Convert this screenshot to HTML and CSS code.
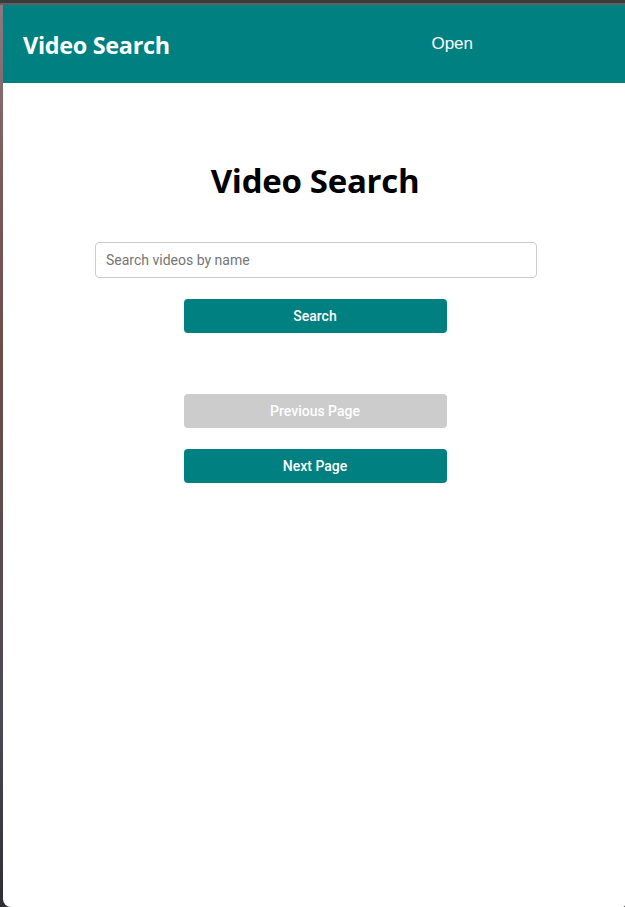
FILE: index.html
```html
<!DOCTYPE html>
<html lang="en">
<head>
<meta charset="utf-8">
<title>Video Search</title>
<link rel="stylesheet" href="styles.css">
</head>
<body>
<div class="desk">
  <div class="app">
    <header class="topbar">
      <div class="brand">Video Search</div>
      <nav class="nav"><span class="nav-link">Open</span></nav>
    </header>
    <main class="content">
      <h1 class="title">Video Search</h1>
      <input class="search-input" type="text" placeholder="Search videos by name">
      <button class="btn">Search</button>
      <div class="pager">
        <button class="btn btn-disabled" disabled>Previous Page</button>
        <button class="btn">Next Page</button>
      </div>
    </main>
  </div>
</div>
</body>
</html>
```
FILE: styles.css
```css
html, body {
  margin: 0;
  padding: 0;
  height: 907px;
  overflow: hidden;
}
body {
  background: #3b3b3d;
}
.desk {
  height: 907px;
  box-sizing: border-box;
  padding-top: 5px;
  padding-left: 3px;
  background:
    linear-gradient(#3b3b3d, #3b3b3d) top left / 100% 3px no-repeat,
    linear-gradient(#606062, #606062) 0 3px / 100% 2px no-repeat,
    linear-gradient(180deg, #8c7a86 0%, #7a5a58 20%, #6e4c48 40%, #5a4c50 60%, #4a4a52 80%, #2e2e32 100%);
}
.app {
  height: 902px;
  background: #ffffff;
  border-bottom-left-radius: 8px;
  border-bottom-right-radius: 2px;
  overflow: hidden;
}
.topbar {
  height: 78px;
  background: #008080;
  display: flex;
  align-items: center;
  padding-left: 20px;
  color: #ffffff;
}
.brand {
  font-family: "Open Sans", "Noto Sans", sans-serif;
  font-weight: 700;
  font-size: 23.4px;
  letter-spacing: -0.3px;
  padding-top: 2px;
}
.nav {
  margin-left: auto;
  padding-right: 152px;
  padding-bottom: 0;
}
.nav-link {
  font-family: "Liberation Sans", Arial, sans-serif;
  font-size: 17px;
  color: #ffffff;
}
.content {
  display: flex;
  flex-direction: column;
  align-items: center;
  padding-top: 70px;
  padding-left: 2px;
}
.title {
  margin: 0;
  font-family: "Open Sans", "Noto Sans", sans-serif;
  font-weight: 700;
  font-size: 33px;
  letter-spacing: -0.3px;
  line-height: 56px;
  color: #000000;
}
.search-input {
  margin-top: 33px;
  margin-left: 2px;
  width: 442px;
  height: 36px;
  box-sizing: border-box;
  border: 1px solid #cccccc;
  border-radius: 4px;
  padding: 0 10px;
  font-family: Roboto, "Liberation Sans", sans-serif;
  font-size: 14px;
  color: #222;
  outline: none;
}
.search-input::placeholder {
  color: #757575;
}
.btn {
  margin-top: 21px;
  width: 263px;
  height: 34px;
  border: none;
  border-radius: 4px;
  background: #008080;
  color: #ffffff;
  font-family: Roboto, "Liberation Sans", sans-serif;
  font-size: 14px;
  font-weight: 500;
  cursor: pointer;
}
.btn-disabled {
  background: #cccccc;
  cursor: default;
}
.pager {
  display: flex;
  flex-direction: column;
  margin-top: 40px;
}
```
